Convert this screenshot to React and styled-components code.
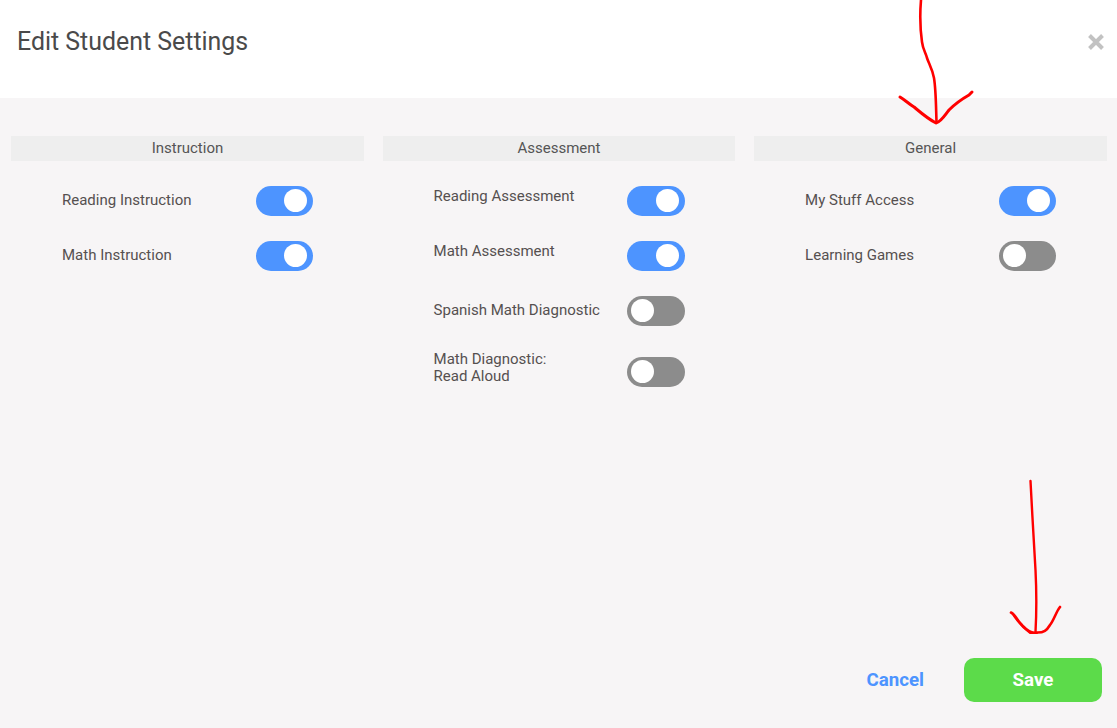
import styled, { createGlobalStyle } from 'styled-components'

const GlobalStyle = createGlobalStyle`
	html, body {
		margin: 0;
		padding: 0;
		height: 100%;
	}
	body {
		font-family: Roboto, "Liberation Sans", sans-serif;
		background: #f7f5f6;
		overflow: hidden;
	}
`

const columns = [
	{
		title: 'Instruction',
		rows: [
			{ label: 'Reading Instruction', on: true },
			{ label: 'Math Instruction', on: true },
		],
	},
	{
		title: 'Assessment',
		rows: [
			{ label: 'Reading Assessment', on: true, lift: 5 },
			{ label: 'Math Assessment', on: true, lift: 5 },
			{ label: 'Spanish Math Diagnostic', on: false },
			{ label: ['Math Diagnostic:', 'Read Aloud'], on: false, lift: 4, tall: true },
		],
	},
	{
		title: 'General',
		rows: [
			{ label: 'My Stuff Access', on: true },
			{ label: 'Learning Games', on: false },
		],
	},
]

const App = () => {
	return (
		<Page>
			<GlobalStyle />
			<Header>
				<Title>Edit Student Settings</Title>
				<Close aria-label='close'>
					<svg width='18' height='18' viewBox='0 0 18 18'>
						<path d='M2.5 2.5 L15.5 15.5 M15.5 2.5 L2.5 15.5' stroke='#c2c2c2' strokeWidth='4' />
					</svg>
				</Close>
			</Header>
			<Columns>
				{columns.map(col => (
					<Column key={col.title}>
						<ColumnTitle>{col.title}</ColumnTitle>
						<Rows>
							{col.rows.map(row => (
								<Row key={String(row.label)} $tall={row.tall}>
									<Label $lift={row.lift || 1}>
										{Array.isArray(row.label)
											? row.label.map(line => <div key={line}>{line}</div>)
											: row.label}
									</Label>
									<Toggle $on={row.on}>
										<Knob />
									</Toggle>
								</Row>
							))}
						</Rows>
					</Column>
				))}
			</Columns>
			<Footer>
				<Cancel>Cancel</Cancel>
				<Save>Save</Save>
			</Footer>
			<Scribble width='1117' height='728' viewBox='0 0 1117 728'>
				<g fill='none' stroke='#ff0000' strokeLinecap='round' strokeLinejoin='round'>
					<path
						strokeWidth='2.6'
						d='M921 0 C920 12 920 28 922 42 C923 50 926 53 927 58 C929 64 932 68 934 78 C936 90 936 108 936.5 122'
					/>
					<path
						strokeWidth='3'
						d='M900 97 C905 100 909 104 914 107 C920 112 928 119 936 123 C941 122 945 115 949 110 C955 104 962 99 969 95 L972 92'
					/>
					<path
						strokeWidth='2.4'
						d='M1030.5 481 C1032 510 1034 545 1035.5 570 C1036.5 590 1037 605 1035.5 632'
					/>
					<path
						strokeWidth='2.6'
						d='M1011 612.5 C1015 614 1017 620 1021 624 C1025 628 1030 634 1036 632.5 C1044 633 1047 630 1050 625 C1054 620 1056 612 1060 607'
					/>
					<path strokeWidth='2' d='M1012 613 C1017 621 1023 628 1030 633 L1037 633' />
				</g>
			</Scribble>
		</Page>
	)
}

const Page = styled.div`
	position: relative;
	width: 1117px;
	height: 728px;
	display: flex;
	flex-direction: column;
	background: #f7f5f6;
	overflow: hidden;
`

const Header = styled.header`
	height: 98px;
	flex: none;
	background: #fff;
	display: flex;
	justify-content: space-between;
	align-items: flex-start;
	padding: 0 12px 0 17px;
	box-sizing: border-box;
`

const Title = styled.h1`
	margin: 27px 0 0;
	font-size: 24.9px;
	line-height: 30px;
	font-weight: 400;
	color: #4a4a4a;
`

const Close = styled.div`
	margin-top: 33px;
	width: 18px;
	height: 18px;
	line-height: 0;
`

const Columns = styled.main`
	flex: 1;
	display: grid;
	grid-template-columns: repeat(3, 1fr);
	column-gap: 18.67px;
	padding: 38px 10px 0 11px;
	align-items: start;
`

const Column = styled.section`
	display: flex;
	flex-direction: column;
`

const ColumnTitle = styled.div`
	height: 25px;
	line-height: 25px;
	background: #eeeeee;
	text-align: center;
	font-size: 15px;
	color: #555555;
`

const Rows = styled.div`
	display: flex;
	flex-direction: column;
	padding: 25px 50.7px 0 51px;
`

const Row = styled.div`
	display: flex;
	align-items: center;
	justify-content: space-between;
	height: 30px;
	margin-bottom: ${p => (p.$tall ? '0' : '25px')};
	&:nth-child(3) {
		margin-bottom: 31px;
	}
`

const Label = styled.div`
	font-size: 15px;
	line-height: 17px;
	color: #555050;
	transform: translateY(${p => -p.$lift}px);
`

const Toggle = styled.div`
	width: 57.5px;
	height: 30px;
	border-radius: 15px;
	flex: none;
	display: flex;
	align-items: center;
	justify-content: ${p => (p.$on ? 'flex-end' : 'flex-start')};
	padding: ${p => (p.$on ? '0 6px 0 0' : '0 0 0 4px')};
	box-sizing: border-box;
	background: ${p => (p.$on ? '#4d94ff' : '#8c8c8c')};
`

const Knob = styled.span`
	width: 23px;
	height: 23px;
	margin-bottom: 1px;
	border-radius: 50%;
	background: #fff;
`

const Footer = styled.footer`
	display: flex;
	justify-content: flex-end;
	align-items: center;
	gap: 40px;
	padding: 0 15px 26px 0;
`

const Cancel = styled.button`
	border: 0;
	padding: 0 0 1px;
	background: none;
	font-family: inherit;
	font-size: 18.7px;
	font-weight: 700;
	color: #4d94ff;
`

const Save = styled.button`
	width: 138px;
	height: 44px;
	border: 0;
	padding: 0 0 1px;
	border-radius: 10px;
	background: #5cdb4a;
	color: #fff;
	font-family: inherit;
	font-size: 18.7px;
	font-weight: 700;
`

const Scribble = styled.svg`
	position: absolute;
	left: 0;
	top: 0;
	pointer-events: none;
`

export default App
